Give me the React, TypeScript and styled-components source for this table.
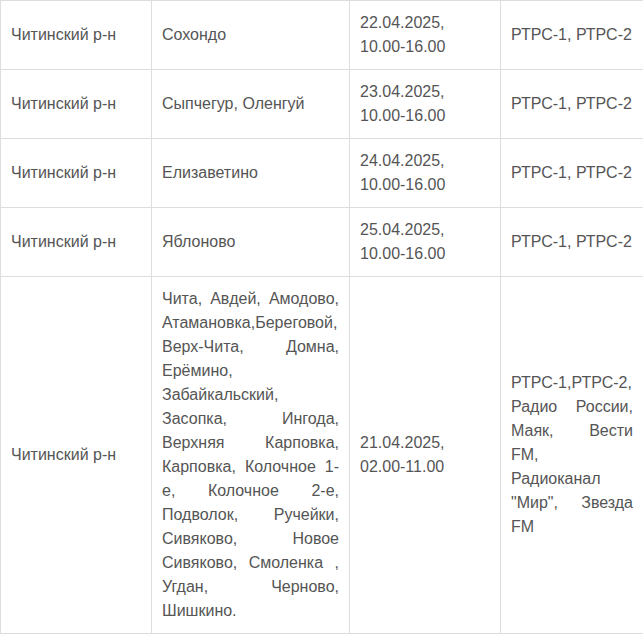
import styled, { createGlobalStyle } from 'styled-components';

const GlobalStyle = createGlobalStyle`
  html, body {
    margin: 0;
    padding: 0;
    background: #ffffff;
    overflow: hidden;
  }
`;

type Row = {
  district: string;
  places: string;
  date: string;
  time: string;
  channels: string;
};

const rows: Row[] = [
  { district: 'Читинский р-н', places: 'Сохондо', date: '22.04.2025,', time: '10.00-16.00', channels: 'РТРС-1, РТРС-2' },
  { district: 'Читинский р-н', places: 'Сыпчегур, Оленгуй', date: '23.04.2025,', time: '10.00-16.00', channels: 'РТРС-1, РТРС-2' },
  { district: 'Читинский р-н', places: 'Елизаветино', date: '24.04.2025,', time: '10.00-16.00', channels: 'РТРС-1, РТРС-2' },
  { district: 'Читинский р-н', places: 'Яблоново', date: '25.04.2025,', time: '10.00-16.00', channels: 'РТРС-1, РТРС-2' },
  {
    district: 'Читинский р-н',
    places:
      'Чита, Авдей, Амодово, Атамановка,Береговой, Верх-Чита, Домна, Ерёмино, Забайкальский, Засопка, Ингода, Верхняя Карповка, Карповка, Колочное 1-е, Колочное 2-е, Подволок, Ручейки, Сивяково, Новое Сивяково, Смоленка , Угдан, Черново, Шишкино.',
    date: '21.04.2025,',
    time: '02.00-11.00',
    channels: 'РТРС-1,РТРС-2, Радио России, Маяк, Вести FM,\nРадиоканал "Мир", Звезда FM',
  },
];

const App = () => {
  return (
    <>
      <GlobalStyle />
      <Table>
        <colgroup>
          <Col $w={151} />
          <Col $w={198} />
          <Col $w={151} />
          <Col $w={143} />
        </colgroup>
        <tbody>
          {rows.map((r, i) => (
            <tr key={i}>
              <Cell>{r.district}</Cell>
              <Cell $justify>{r.places}</Cell>
              <Cell>
                {r.date}
                <br />
                {r.time}
              </Cell>
              <Cell $justify>{r.channels}</Cell>
            </tr>
          ))}
        </tbody>
      </Table>
    </>
  );
};

export default App;

const Table = styled.table`
  width: 644px;
  table-layout: fixed;
  border-collapse: collapse;
  font-family: 'Liberation Sans', Arial, sans-serif;
  font-size: 16px;
  line-height: 24px;
  color: #555555;
`;

const Col = styled.col<{ $w: number }>`
  width: ${(p) => p.$w}px;
`;

const Cell = styled.td<{ $justify?: boolean }>`
  border: 1px solid #dddddd;
  padding: 10px;
  vertical-align: middle;
  white-space: pre-line;
  text-align: ${(p) => (p.$justify ? 'justify' : 'left')};
`;
